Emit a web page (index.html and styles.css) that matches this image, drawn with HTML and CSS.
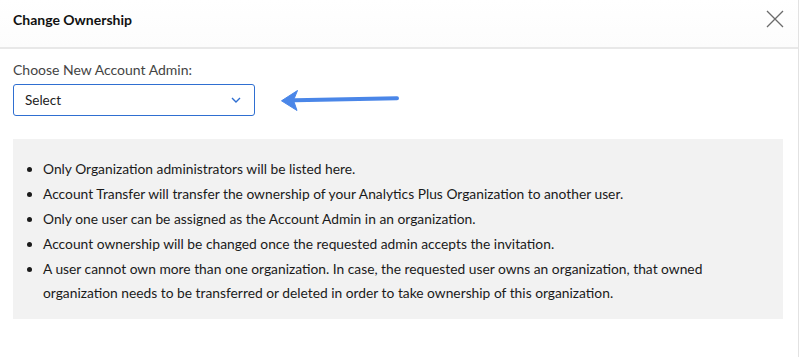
FILE: index.html
```html
<!DOCTYPE html>
<html lang="en">
<head>
    <meta charset="UTF-8">
    <meta name="viewport" content="width=device-width, initial-scale=1.0">
    <title>Change Ownership</title>
    <link rel="stylesheet" href="styles.css">
</head>
<body>
    <div class="dialog">
        <div class="dialog-header">
            <h2>Change Ownership</h2>
            <button class="close-btn" aria-label="Close">
                <svg width="18" height="18" viewBox="0 0 18 18">
                    <path d="M1 1 L17 17 M17 1 L1 17" stroke="#6b6b6b" stroke-width="1.3" fill="none"/>
                </svg>
            </button>
        </div>

        <div class="dialog-body">
            <label class="field-label" for="adminSelect">Choose New Account Admin:</label>
            <div class="select-row">
                <div class="select-box" id="adminSelect">
                    <span>Select</span>
                    <svg width="10" height="6" viewBox="0 0 10 6">
                        <path d="M1 1 L5 5 L9 1" stroke="#2f6fd1" stroke-width="1.4" fill="none"/>
                    </svg>
                </div>
                <svg class="hint-arrow" width="124" height="24" viewBox="0 0 124 24">
                    <path d="M17 12.2 L119 10.2" stroke="#4a86e8" stroke-width="4" stroke-linecap="round" fill="none"/>
                    <path d="M3.5 12.8 L19.5 2.5 L15.5 12.3 L19 22.5 Z" fill="#4a86e8" stroke="#4a86e8" stroke-width="1" stroke-linejoin="round"/>
                </svg>
            </div>

            <div class="notes">
                <ul>
                    <li>Only Organization administrators will be listed here.</li>
                    <li>Account Transfer will transfer the ownership of your Analytics Plus Organization to another user.</li>
                    <li>Only one user can be assigned as the Account Admin in an organization.</li>
                    <li>Account ownership will be changed once the requested admin accepts the invitation.</li>
                    <li>A user cannot own more than one organization. In case, the requested user owns an organization, that owned organization needs to be transferred or deleted in order to take ownership of this organization.</li>
                </ul>
            </div>
        </div>
    </div>
</body>
</html>
```

FILE: styles.css
```css
body {
    margin: 0;
    font-family: Lato, "Open Sans", sans-serif;
    color: #333;
    background: #fff;
}

.dialog {
    width: 799px;
    height: 357px;
    box-sizing: border-box;
    border-right: 1px solid #e2e2e2;
}

.dialog-header {
    height: 47px;
    display: flex;
    align-items: center;
    justify-content: space-between;
    padding: 0 14px 0 13px;
    border-bottom: 2px solid #e8e8e8;
    background: linear-gradient(#fff, #fcfcfc);
}

h2 {
    margin: 0;
    font-size: 14px;
    font-weight: 700;
    color: #111;
    padding-bottom: 9px;
}

.close-btn {
    background: none;
    border: none;
    padding: 0;
    cursor: pointer;
    margin-bottom: 10px;
    display: flex;
}

.dialog-body {
    padding: 12px 15px 0 13px;
}

.field-label {
    display: block;
    font-size: 14px;
    line-height: 17px;
    color: #444;
}

.select-row {
    display: flex;
    align-items: center;
    margin-top: 6px;
}

.select-box {
    width: 242px;
    height: 32px;
    box-sizing: border-box;
    border: 1px solid #2f6fd1;
    border-radius: 3px;
    display: flex;
    align-items: center;
    justify-content: space-between;
    padding: 0 13px 0 11px;
    font-size: 13.5px;
    color: #222;
}

.hint-arrow {
    margin-left: 23px;
}

.notes {
    margin-top: 23px;
    background: #f2f2f2;
    padding: 18px 20px 14px 17px;
}

.notes ul {
    margin: 0;
    padding-left: 13px;
}

.notes li {
    font-size: 13.8px;
    line-height: 24px;
    margin-bottom: 1px;
    color: #1a1a1a;
}

.notes li:last-child {
    margin-bottom: 0;
}
```
